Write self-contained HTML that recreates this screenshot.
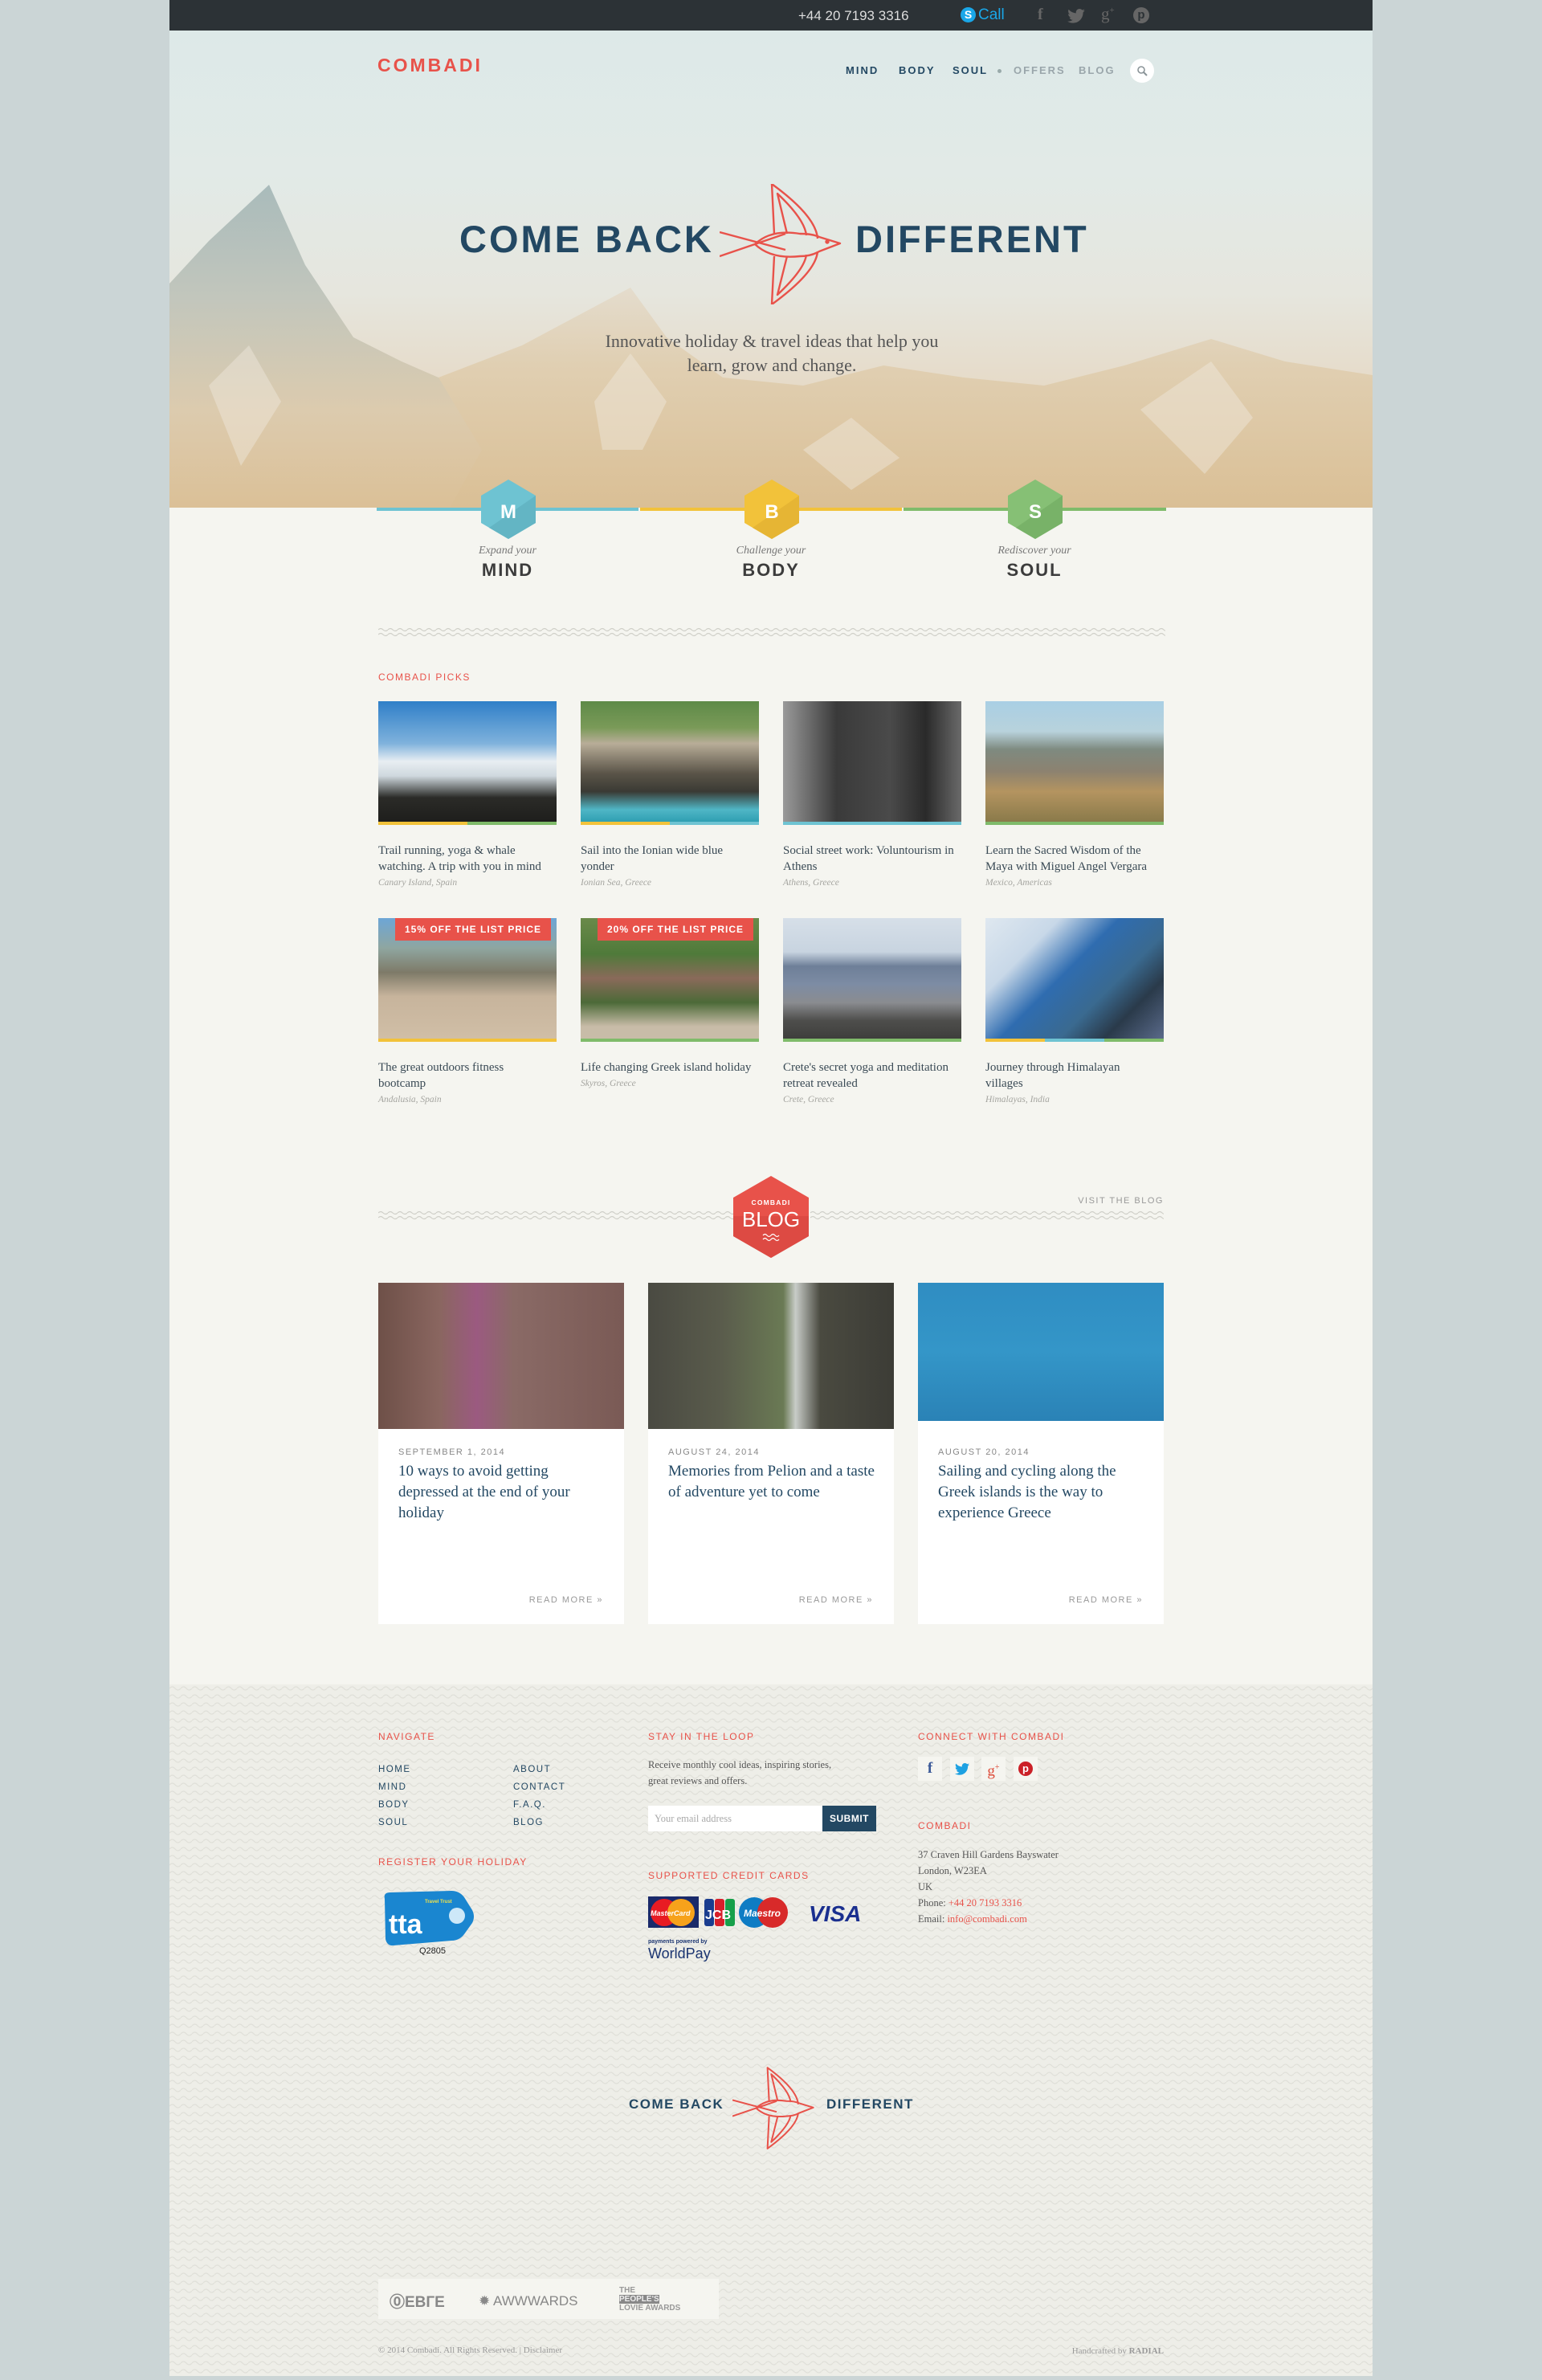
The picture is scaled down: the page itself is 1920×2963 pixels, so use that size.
<!DOCTYPE html>
<html><head><meta charset="utf-8">
<style>
*{margin:0;padding:0;box-sizing:border-box}
body{width:1920px;height:2958px;background:#cbd5d6;font-family:"Liberation Sans",sans-serif;position:relative;overflow:hidden}
.a{position:absolute}
.wrap{position:absolute;left:211px;top:0;width:1498px;height:2958px;background:#f5f5f0}
.cond{font-family:"Liberation Sans Narrow","Liberation Sans",sans-serif}
.serif{font-family:"Liberation Serif",serif}
.nav{font-family:"Liberation Sans",sans-serif;font-weight:bold;font-size:13px;letter-spacing:2px;color:#234863;top:80px}
.lbl{font-family:"Liberation Sans Narrow","Liberation Sans",sans-serif;font-size:12px;letter-spacing:1.5px;color:#e8524a;text-transform:uppercase}
.pk{position:absolute;width:222px}
.pk .im{height:150px}
.pk .bar{height:4px;display:flex}
.pk .bar i{flex:1}
.pk .t{font-family:"Liberation Serif",serif;font-size:15px;line-height:20px;color:#3a4a55;margin-top:22px;padding-right:6px}
.pk .l{font-family:"Liberation Serif",serif;font-style:italic;font-size:11.5px;color:#a5a5a0;line-height:20px}
.badge{position:absolute;left:21px;top:0;height:28px;background:#e8524a;color:#fff;font-family:"Liberation Sans Narrow","Liberation Sans",sans-serif;font-weight:bold;font-size:12px;letter-spacing:1px;line-height:28px;padding:0 12px}
.card{position:absolute;top:1597px;width:306px;height:425px;background:#fff}
.card .d{position:absolute;left:25px;top:205px;font-family:"Liberation Sans Narrow","Liberation Sans",sans-serif;font-size:11px;letter-spacing:1.5px;color:#888}
.card .h{position:absolute;left:25px;top:222px;width:260px;font-family:"Liberation Serif",serif;font-size:19px;line-height:26px;color:#234863}
.card .r{position:absolute;right:26px;top:389px;font-family:"Liberation Sans Narrow","Liberation Sans",sans-serif;font-size:11px;letter-spacing:1.5px;color:#999}
.fl{font-family:"Liberation Sans Narrow","Liberation Sans",sans-serif;font-size:11.5px;letter-spacing:1.5px;color:#234863}
.ft{font-family:"Liberation Serif",serif;font-size:12.5px;color:#555;line-height:20px}
</style></head><body>
<div class="wrap">
<div class="a" style="left:0;top:0;width:1498px;height:38px;background:#2c3236"></div>
<div class="a cond" style="left:783px;top:10px;color:#ddd;font-size:17px">+44 20 7193 3316</div>
<div class="a" style="left:985px;top:9px;width:19px;height:19px;border-radius:50%;background:#1aa7e8;color:#fff;font-weight:bold;font-size:14px;text-align:center;line-height:19px">S</div>
<div class="a cond" style="left:1007px;top:8px;color:#1aa7e8;font-size:19px">Call</div>
<div class="a" style="left:1081px;top:7px;color:#666;font-weight:bold;font-size:20px;font-family:'Liberation Serif',serif">f</div>
<svg class="a" style="left:1118px;top:11px" width="22" height="18" viewBox="0 0 24 20"><path d="M24 2.4c-.9.4-1.8.7-2.8.8 1-.6 1.8-1.6 2.2-2.7-1 .6-2 1-3.1 1.2C19.3.7 18 0 16.6 0c-2.7 0-4.9 2.2-4.9 4.9 0 .4 0 .8.1 1.1C7.7 5.8 4.1 3.9 1.7.9c-.4.7-.7 1.6-.7 2.5 0 1.7.9 3.2 2.2 4.1-.8 0-1.6-.2-2.2-.6v.1c0 2.4 1.7 4.4 3.9 4.8-.4.1-.8.2-1.3.2-.3 0-.6 0-.9-.1.6 2 2.4 3.4 4.6 3.4-1.7 1.3-3.8 2.1-6.1 2.1-.4 0-.8 0-1.2-.1C2.2 18.8 4.8 19.6 7.5 19.6c9.1 0 14-7.5 14-14v-.6c1-.7 1.8-1.6 2.5-2.6z" fill="#666"/></svg>
<div class="a serif" style="left:1160px;top:5px;color:#666;font-size:21px">g<sup style="font-size:11px">+</sup></div>
<div class="a" style="left:1200px;top:9px;width:20px;height:20px;border-radius:50%;background:#666;color:#2c3236;font-weight:bold;font-size:15px;text-align:center;line-height:20px">p</div>

<div class="a" style="left:0;top:38px;width:1498px;height:594px;background:linear-gradient(#dde9e8 0%,#e2eae7 30%,#e6e6de 55%,#e6dccb 72%,#e0cba8 100%);overflow:hidden">
<svg width="1498" height="594" viewBox="211 38 1498 594" style="position:absolute;left:0;top:0">
<defs>
<linearGradient id="mg" x1="0" y1="0" x2="0" y2="1"><stop offset="0" stop-color="#e4dccd"/><stop offset="0.35" stop-color="#e0cfb2"/><stop offset="1" stop-color="#dabf95"/></linearGradient>
<linearGradient id="lg" x1="0" y1="0" x2="0" y2="1"><stop offset="0" stop-color="#a9bbbb"/><stop offset="0.35" stop-color="#c2c6bc"/><stop offset="0.7" stop-color="#dccbae"/><stop offset="1" stop-color="#dbc097"/></linearGradient>
</defs>
<polygon points="546,470 650,430 785,358 830,420 900,470 1000,480 1100,455 1200,470 1300,480 1400,455 1508,422 1600,450 1709,467 1709,632 546,632" fill="url(#mg)"/>
<polygon points="211,353 260,300 335,230 380,330 440,420 500,450 546,470 600,560 560,632 211,632" fill="url(#lg)"/>
<g fill="#efe9de" opacity=".45">
<polygon points="740,500 785,440 830,500 800,560 750,560"/>
<polygon points="1000,560 1060,520 1120,570 1060,610"/>
<polygon points="1420,510 1508,450 1560,520 1500,590"/>
<polygon points="260,480 310,430 350,500 300,580"/>
</g>
</svg>
</div>
<div class="a" style="left:259px;top:68px;color:#e8524a;font-weight:bold;font-size:23px;letter-spacing:3px">COMBADI</div>
<div class="a nav" style="left:842px">MIND</div>
<div class="a nav" style="left:908px">BODY</div>
<div class="a nav" style="left:975px">SOUL</div>
<div class="a" style="left:1031px;top:86px;width:5px;height:5px;border-radius:50%;background:#9aa"></div>
<div class="a nav" style="left:1051px;color:#9aa6ab">OFFERS</div>
<div class="a nav" style="left:1132px;color:#9aa6ab">BLOG</div>
<div class="a" style="left:1196px;top:73px;width:30px;height:30px;border-radius:50%;background:#fff"><svg width="30" height="30"><circle cx="14" cy="14" r="4" stroke="#8a9498" stroke-width="1.6" fill="none"/><path d="M17 17l4 4" stroke="#8a9498" stroke-width="2"/></svg></div>

<div class="a" style="left:361px;top:270px;color:#234863;font-weight:bold;font-size:47px;letter-spacing:3px;line-height:56px">COME BACK</div>
<div class="a" style="left:854px;top:270px;color:#234863;font-weight:bold;font-size:47px;letter-spacing:3px;line-height:56px">DIFFERENT</div>
<svg class="a" style="left:685px;top:229px" width="152" height="150" viewBox="0 0 152 150" fill="none" stroke="#e8524a" stroke-width="2.4" stroke-linejoin="round">
<path d="M0 60 L82 82 M0 90 L82 62"/>
<path d="M44 75 Q64 56 100 62 Q116 62 124 66 L150 74 L124 84 Q114 90 100 90 Q64 94 44 75"/>
<path d="M68 62 L65 0 Q120 40 122 68"/><path d="M84 62 L72 12 Q106 44 108 64"/>
<path d="M68 90 L65 150 Q120 110 122 84"/><path d="M84 90 L72 138 Q106 106 108 88"/>
<circle cx="134" cy="72" r="1.5" fill="#e8524a"/>
</svg>
<div class="a serif" style="left:460px;top:410px;width:580px;text-align:center;color:#555;font-size:22px;line-height:30px">Innovative holiday &amp; travel ideas that help you<br>learn, grow and change.</div>

<div class="a" style="left:258px;top:632px;width:326px;height:4px;background:#6ec3d2"></div>
<div class="a" style="left:586px;top:632px;width:326px;height:4px;background:#f2c23a"></div>
<div class="a" style="left:914px;top:632px;width:327px;height:4px;background:#7fbb6a"></div>
<svg class="a" style="left:388px;top:597px" width="68" height="74"><polygon points="34,0 68,20 68,54 34,74 0,54 0,20" fill="#6ec3d2"/><polygon points="68,20 68,54 34,74 10,60" fill="#63b5c4"/><text x="34" y="48" text-anchor="middle" font-family="Liberation Sans" font-weight="bold" font-size="24" fill="#fff">M</text></svg>
<svg class="a" style="left:716px;top:597px" width="68" height="74"><polygon points="34,0 68,20 68,54 34,74 0,54 0,20" fill="#f2c23a"/><polygon points="68,20 68,54 34,74 10,60" fill="#e6b534"/><text x="34" y="48" text-anchor="middle" font-family="Liberation Sans" font-weight="bold" font-size="24" fill="#fff">B</text></svg>
<svg class="a" style="left:1044px;top:597px" width="68" height="74"><polygon points="34,0 68,20 68,54 34,74 0,54 0,20" fill="#86c075"/><polygon points="68,20 68,54 34,74 10,60" fill="#78b268"/><text x="34" y="48" text-anchor="middle" font-family="Liberation Sans" font-weight="bold" font-size="24" fill="#fff">S</text></svg>
<div class="a serif" style="left:321px;top:678px;width:200px;text-align:center;font-style:italic;color:#777;font-size:14px">Expand your</div>
<div class="a serif" style="left:649px;top:678px;width:200px;text-align:center;font-style:italic;color:#777;font-size:14px">Challenge your</div>
<div class="a serif" style="left:977px;top:678px;width:200px;text-align:center;font-style:italic;color:#777;font-size:14px">Rediscover your</div>
<div class="a" style="left:321px;top:697px;width:200px;text-align:center;font-weight:bold;color:#3c3c3c;font-size:22px;letter-spacing:2px">MIND</div>
<div class="a" style="left:649px;top:697px;width:200px;text-align:center;font-weight:bold;color:#3c3c3c;font-size:22px;letter-spacing:2px">BODY</div>
<div class="a" style="left:977px;top:697px;width:200px;text-align:center;font-weight:bold;color:#3c3c3c;font-size:22px;letter-spacing:2px">SOUL</div>

<svg class="a" style="left:260px;top:780px" width="980" height="14"><defs><pattern id="wv" width="12" height="14" patternUnits="userSpaceOnUse"><path d="M0 4 Q3 1 6 4 T12 4 M0 10 Q3 7 6 10 T12 10" stroke="#cfcfc8" fill="none" stroke-width="1.2"/></pattern></defs><rect width="980" height="14" fill="url(#wv)"/></svg>

<div class="a lbl" style="left:260px;top:836px">Combadi Picks</div>
<div class="pk" style="left:260px;top:873px"><div class="im" style="background:linear-gradient(#2f7fc8 0%,#7fb2dc 35%,#e8eef2 50%,#cfd8de 62%,#2b2b28 80%,#1e1e1c)"></div><div class="bar"><i style="background:#f2c23a"></i><i style="background:#7fbb6a"></i></div><div class="t">Trail running, yoga &amp; whale watching. A trip with you in mind</div><div class="l">Canary Island, Spain</div></div>
<div class="pk" style="left:512px;top:873px"><div class="im" style="background:linear-gradient(#5e8a48 0%,#7a9a58 22%,#b8ad98 35%,#5a5448 60%,#3a3a34 75%,#4fb6c6 90%,#2f9fb2)"></div><div class="bar"><i style="background:#f2c23a"></i><i style="background:#6ec3d2"></i></div><div class="t">Sail into the Ionian wide blue yonder</div><div class="l">Ionian Sea, Greece</div></div>
<div class="pk" style="left:764px;top:873px"><div class="im" style="background:linear-gradient(90deg,#9a9a9a,#3a3a3a 30%,#4a4a4a 60%,#2a2a2a 80%,#6a6a6a)"></div><div class="bar"><i style="background:#6ec3d2"></i></div><div class="t">Social street work: Voluntourism in Athens</div><div class="l">Athens, Greece</div></div>
<div class="pk" style="left:1016px;top:873px"><div class="im" style="background:linear-gradient(#a9cfe4 0%,#b8d2dc 25%,#7e8a80 40%,#8c8270 58%,#b49460 75%,#8a7a4a)"></div><div class="bar"><i style="background:#7fbb6a"></i></div><div class="t">Learn the Sacred Wisdom of the Maya with Miguel Angel Vergara</div><div class="l">Mexico, Americas</div></div>

<div class="pk" style="left:260px;top:1143px"><div class="im" style="background:linear-gradient(#6da6d6 0%,#8fa6a0 25%,#7e7a68 45%,#c7b49c 65%,#d0bea6)"></div><div class="bar"><i style="background:#f2c23a"></i></div><div class="badge">15% OFF THE LIST PRICE</div><div class="t">The great outdoors fitness bootcamp</div><div class="l">Andalusia, Spain</div></div>
<div class="pk" style="left:512px;top:1143px"><div class="im" style="background:linear-gradient(#6a8a4a 0%,#4f7a3a 30%,#8a6a5a 50%,#4c6a38 70%,#c8bca8 90%)"></div><div class="bar"><i style="background:#7fbb6a"></i></div><div class="badge">20% OFF THE LIST PRICE</div><div class="t">Life changing Greek island holiday</div><div class="l">Skyros, Greece</div></div>
<div class="pk" style="left:764px;top:1143px"><div class="im" style="background:linear-gradient(#d6dfe8 0%,#c8d4e0 28%,#6e7f98 40%,#7d8ca4 55%,#8a8c90 70%,#4e4e4c 85%,#3e3e3c)"></div><div class="bar"><i style="background:#7fbb6a"></i></div><div class="t">Crete's secret yoga and meditation retreat revealed</div><div class="l">Crete, Greece</div></div>
<div class="pk" style="left:1016px;top:1143px"><div class="im" style="background:linear-gradient(135deg,#dfe8f0 0%,#c8d8e8 25%,#2f6cb0 45%,#3a6a90 65%,#2a3a4a 80%,#5a6a8a)"></div><div class="bar"><i style="background:#f2c23a"></i><i style="background:#6ec3d2"></i><i style="background:#7fbb6a"></i></div><div class="t">Journey through Himalayan villages</div><div class="l">Himalayas, India</div></div>

<svg class="a" style="left:260px;top:1506px" width="446" height="14"><rect width="446" height="14" fill="url(#wv)"/></svg>
<svg class="a" style="left:798px;top:1506px" width="440" height="14"><rect width="440" height="14" fill="url(#wv)"/></svg>
<svg class="a" style="left:702px;top:1464px" width="94" height="102"><polygon points="47,0 94,27 94,75 47,102 0,75 0,27" fill="#e8524a"/><polygon points="94,50 94,75 47,102 0,75 0,50" fill="#dd4a43"/><text x="47" y="36" text-anchor="middle" font-family="Liberation Sans" font-weight="bold" font-size="8.5" letter-spacing="1.2" fill="#fff">COMBADI</text><text x="47" y="63" text-anchor="middle" font-family="Liberation Sans Narrow, Liberation Sans" font-size="26" fill="#fff">BLOG</text><path d="M37 74q2.5-3 5 0t5 0 5 0 5 0M37 79q2.5-3 5 0t5 0 5 0 5 0" stroke="#fff" fill="none" stroke-width="1.2"/></svg>
<div class="a cond" style="left:1100px;top:1489px;width:138px;text-align:right;font-size:11px;letter-spacing:1.5px;color:#999">VISIT THE BLOG</div>

<div class="card" style="left:260px"><div style="height:182px;background:linear-gradient(90deg,#6e5048,#8a6660 25%,#9b5a80 40%,#8a6a66 55%,#7a5a55)"></div><div class="d">SEPTEMBER 1, 2014</div><div class="h">10 ways to avoid getting depressed at the end of your holiday</div><div class="r">READ MORE »</div></div>
<div class="card" style="left:596px"><div style="height:182px;background:linear-gradient(90deg,#4a4a42,#5a5c4c 30%,#6a7a54 55%,#c8ccc8 60%,#4a4a40 70%,#3c3c36)"></div><div class="d">AUGUST 24, 2014</div><div class="h">Memories from Pelion and a taste of adventure yet to come</div><div class="r">READ MORE »</div></div>
<div class="card" style="left:932px"><div style="height:172px;background:linear-gradient(#2f8dc2,#3496c8 50%,#2a82b6)"></div><div class="d">AUGUST 20, 2014</div><div class="h">Sailing and cycling along the Greek islands is the way to experience Greece</div><div class="r">READ MORE »</div></div>

<div class="a" style="left:0;top:2097px;width:1498px;height:861px;background:#eeeee8"><svg width="1498" height="861"><defs><pattern id="wf" width="14" height="10" patternUnits="userSpaceOnUse"><path d="M0 5 Q3.5 1 7 5 T14 5" stroke="#e0e0d9" fill="none" stroke-width="1.3"/></pattern></defs><rect width="1498" height="861" fill="url(#wf)"/></svg></div>
<div class="a lbl" style="left:260px;top:2155px">Navigate</div>
<div class="a fl" style="left:260px;top:2192px;line-height:22px">HOME<br>MIND<br>BODY<br>SOUL</div>
<div class="a fl" style="left:428px;top:2192px;line-height:22px">ABOUT<br>CONTACT<br>F.A.Q.<br>BLOG</div>
<div class="a lbl" style="left:260px;top:2311px">Register your holiday</div>
<svg class="a" style="left:263px;top:2352px" width="120" height="82"><path d="M5 12 Q3 4 12 4 L88 2 Q98 2 104 10 L114 26 Q118 34 114 42 L104 56 Q98 64 88 64 L16 70 Q8 71 6 62 Z" fill="#1a86d0"/><text x="10" y="55" font-family="Liberation Sans" font-weight="bold" font-size="34" fill="#fff">tta</text><circle cx="95" cy="33" r="10" fill="#cde8f8"/><text x="55" y="17" font-family="Liberation Sans" font-weight="bold" font-size="6" fill="#f2e24a">Travel Trust</text><text x="48" y="80" font-family="Liberation Sans" font-size="11" fill="#222">Q2805</text></svg>

<div class="a lbl" style="left:596px;top:2155px">Stay in the loop</div>
<div class="a ft" style="left:596px;top:2187px">Receive monthly cool ideas, inspiring stories,<br>great reviews and offers.</div>
<div class="a serif" style="left:596px;top:2248px;width:217px;height:32px;background:#fff;color:#aaa;font-size:12.5px;line-height:32px;padding-left:8px">Your email address</div>
<div class="a cond" style="left:813px;top:2248px;width:67px;height:32px;background:#234863;color:#fff;font-size:12px;font-weight:bold;text-align:center;line-height:32px;letter-spacing:.5px">SUBMIT</div>
<div class="a lbl" style="left:596px;top:2328px">Supported credit cards</div>
<svg class="a" style="left:596px;top:2361px" width="280" height="40"><rect x="0" y="0" width="63" height="39" fill="#1a2a6a"/><circle cx="20" cy="20" r="17" fill="#e81b23"/><circle cx="41" cy="20" r="17" fill="#f7a21b"/><text x="3" y="24" font-family="Liberation Sans" font-style="italic" font-weight="bold" font-size="9" fill="#fff">MasterCard</text><rect x="70" y="3" width="12" height="34" rx="3" fill="#1a3d8f"/><rect x="83" y="3" width="12" height="34" rx="3" fill="#d81f2a"/><rect x="96" y="3" width="12" height="34" rx="3" fill="#16a04a"/><text x="71" y="28" font-family="Liberation Sans" font-weight="bold" font-size="16" fill="#fff">JCB</text><circle cx="132" cy="20" r="19" fill="#0e7cc4"/><circle cx="155" cy="20" r="19" fill="#d82a2a"/><text x="119" y="25" font-family="Liberation Sans" font-style="italic" font-weight="bold" font-size="12" fill="#fff">Maestro</text><text x="200" y="31" font-family="Liberation Sans" font-style="italic" font-weight="bold" font-size="28" fill="#1a2f8f">VISA</text></svg>
<div class="a" style="left:596px;top:2414px;font-size:7px;color:#1a3470;font-weight:bold">payments powered by</div>
<div class="a cond" style="left:596px;top:2422px;font-size:18px;color:#1a3470">WorldPay</div>

<div class="a lbl" style="left:932px;top:2155px">Connect with Combadi</div>
<div class="a" style="left:932px;top:2187px;width:30px;height:30px;background:#f5f5f0;color:#3b5998;font-weight:bold;font-size:19px;text-align:center;line-height:30px;font-family:'Liberation Serif',serif">f</div>
<div class="a" style="left:972px;top:2187px;width:30px;height:30px;background:#f5f5f0"><svg width="30" height="30"><path transform="translate(6 8) scale(.75)" d="M24 2.4c-.9.4-1.8.7-2.8.8 1-.6 1.8-1.6 2.2-2.7-1 .6-2 1-3.1 1.2C19.3.7 18 0 16.6 0c-2.7 0-4.9 2.2-4.9 4.9 0 .4 0 .8.1 1.1C7.7 5.8 4.1 3.9 1.7.9c-.4.7-.7 1.6-.7 2.5 0 1.7.9 3.2 2.2 4.1-.8 0-1.6-.2-2.2-.6v.1c0 2.4 1.7 4.4 3.9 4.8-.4.1-.8.2-1.3.2-.3 0-.6 0-.9-.1.6 2 2.4 3.4 4.6 3.4-1.7 1.3-3.8 2.1-6.1 2.1-.4 0-.8 0-1.2-.1C2.2 18.8 4.8 19.6 7.5 19.6c9.1 0 14-7.5 14-14v-.6c1-.7 1.8-1.6 2.5-2.6z" fill="#1da1e2"/></svg></div>
<div class="a serif" style="left:1011px;top:2187px;width:30px;height:30px;background:#f5f5f0;color:#dd4b39;font-size:19px;text-align:center;line-height:28px">g<sup style="font-size:10px">+</sup></div>
<div class="a" style="left:1051px;top:2187px;width:30px;height:30px;background:#f5f5f0"><div style="margin:6px;width:18px;height:18px;border-radius:50%;background:#cb2027;color:#fff;font-weight:bold;font-size:13px;text-align:center;line-height:18px">p</div></div>
<div class="a lbl" style="left:932px;top:2266px">Combadi</div>
<div class="a ft" style="left:932px;top:2299px">37 Craven Hill Gardens Bayswater<br>London, W23EA<br>UK<br>Phone: <span style="color:#e8524a">+44 20 7193 3316</span><br>Email: <span style="color:#e8524a">info@combadi.com</span></div>

<div class="a" style="left:572px;top:2610px;color:#234863;font-weight:bold;font-size:17px;letter-spacing:1.5px">COME BACK</div>
<div class="a" style="left:818px;top:2610px;color:#234863;font-weight:bold;font-size:17px;letter-spacing:1.5px">DIFFERENT</div>
<svg class="a" style="left:701px;top:2573px" width="102" height="103" viewBox="0 0 152 150" fill="none" stroke="#e8524a" stroke-width="3" stroke-linejoin="round">
<path d="M0 60 L82 82 M0 90 L82 62"/>
<path d="M44 75 Q64 56 100 62 Q116 62 124 66 L150 74 L124 84 Q114 90 100 90 Q64 94 44 75"/>
<path d="M68 62 L65 0 Q120 40 122 68"/><path d="M84 62 L72 12 Q106 44 108 64"/>
<path d="M68 90 L65 150 Q120 110 122 84"/><path d="M84 90 L72 138 Q106 106 108 88"/>
</svg>

<div class="a" style="left:260px;top:2837px;width:424px;height:50px;background:#f5f5f0"></div>
<div class="a" style="left:274px;top:2851px;color:#888;font-weight:bold;font-size:19px">⓪ЕВГЕ</div>
<div class="a cond" style="left:385px;top:2855px;color:#888;font-size:17px">✹ AWWWARDS</div>
<div class="a" style="left:560px;top:2846px;color:#999;font-weight:bold;font-size:10px;line-height:11px">THE<br><span style="background:#888;color:#eee">PEOPLE'S</span><br>LOVIE AWARDS</div>
<div class="a serif" style="left:260px;top:2920px;color:#999;font-size:11px">© 2014 Combadi. All Rights Reserved. | Disclaimer</div>
<div class="a serif" style="left:1098px;top:2921px;width:140px;text-align:right;color:#999;font-size:11px">Handcrafted by <b>RADIAL</b></div>
</div>
</body></html>
